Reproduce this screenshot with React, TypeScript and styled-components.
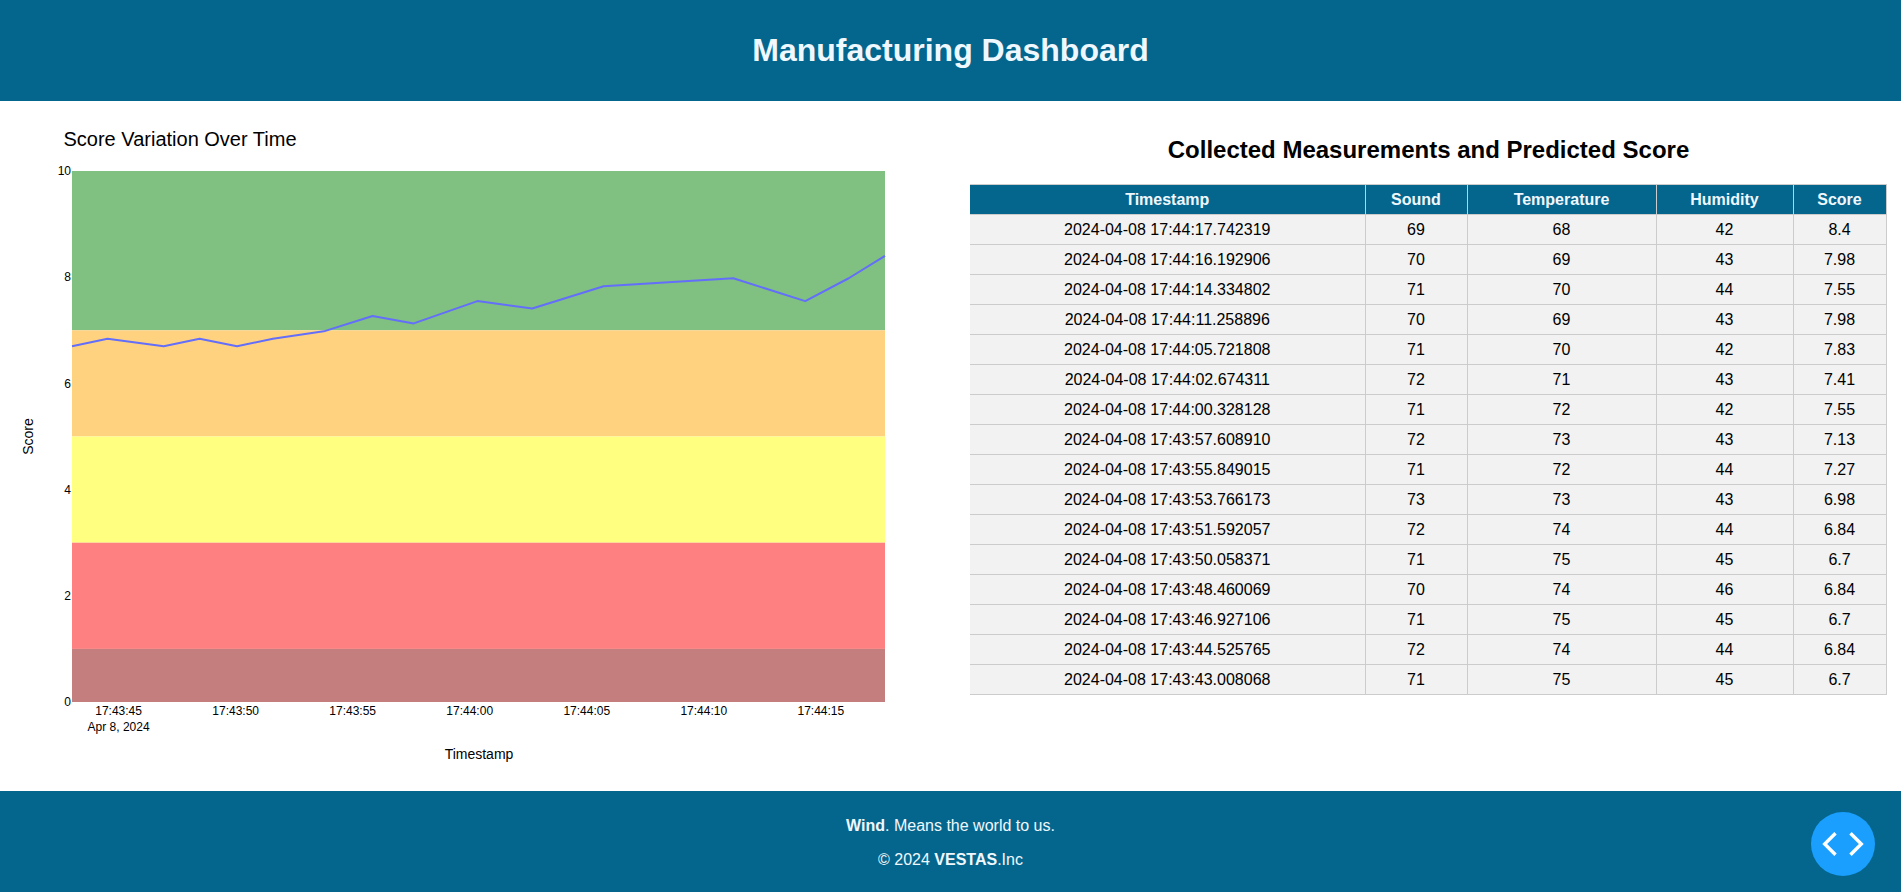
import React from "react";
import styled, { createGlobalStyle } from "styled-components";

const GlobalStyle = createGlobalStyle`
  html, body { margin: 0; padding: 0; background: #fff; }
  body { font-family: "Liberation Sans", Arial, sans-serif; color: #000; }
`;

const Page = styled.div`
  position: relative;
  display: flex;
  flex-direction: column;
  height: 892px;
  overflow: hidden;
`;
const Header = styled.header`
  height: 101px;
  flex: none;
  background: #05668d;
  display: flex;
  align-items: center;
  justify-content: center;
`;
const Title = styled.h1`
  margin: 0;
  font-size: 32px;
  font-weight: 700;
  color: #f0f8ff;
`;
const Main = styled.main`
  flex: 1;
  display: flex;
  min-height: 0;
`;
const ChartPane = styled.section`
  width: 970px;
  flex: none;
`;
const TablePane = styled.section`
  flex: 1;
  padding: 34px 14px 0 0;
`;
const TableTitle = styled.h2`
  margin: 0 0 19px;
  font-size: 24px;
  line-height: 30px;
  font-weight: 700;
  text-align: center;
`;
const Table = styled.table`
  border-collapse: collapse;
  width: 916px;
  table-layout: fixed;
  font-size: 16px;
`;
const Th = styled.th`
  height: 29px;
  padding: 0;
  background: #05668d;
  color: #f0f8ff;
  border: 1px solid #cccccc;
  font-weight: 700;
  text-align: center;
  &:first-child { border-left: 0; }
`;
const Td = styled.td`
  height: 29px;
  padding: 0;
  background: #f2f2f2;
  border: 1px solid #cccccc;
  text-align: center;
  &:first-child { border-left: 0; }
`;
const Footer = styled.footer`
  height: 101px;
  flex: none;
  padding-top: 2px;
  box-sizing: border-box;
  background: #05668d;
  color: #f0f8ff;
  font-size: 16px;
  display: flex;
  flex-direction: column;
  align-items: center;
  justify-content: center;
  gap: 16px;
`;
const FooterLine = styled.div`
  line-height: 18px;
`;
const Fab = styled.button`
  position: absolute;
  right: 26px;
  bottom: 16px;
  width: 64px;
  height: 64px;
  border: 0;
  padding: 0;
  border-radius: 50%;
  background: #1a9fff;
  display: flex;
  align-items: center;
  justify-content: center;
`;

const rows: [string, number, number, number, number][] = [
  ["2024-04-08 17:44:17.742319", 69, 68, 42, 8.4],
  ["2024-04-08 17:44:16.192906", 70, 69, 43, 7.98],
  ["2024-04-08 17:44:14.334802", 71, 70, 44, 7.55],
  ["2024-04-08 17:44:11.258896", 70, 69, 43, 7.98],
  ["2024-04-08 17:44:05.721808", 71, 70, 42, 7.83],
  ["2024-04-08 17:44:02.674311", 72, 71, 43, 7.41],
  ["2024-04-08 17:44:00.328128", 71, 72, 42, 7.55],
  ["2024-04-08 17:43:57.608910", 72, 73, 43, 7.13],
  ["2024-04-08 17:43:55.849015", 71, 72, 44, 7.27],
  ["2024-04-08 17:43:53.766173", 73, 73, 43, 6.98],
  ["2024-04-08 17:43:51.592057", 72, 74, 44, 6.84],
  ["2024-04-08 17:43:50.058371", 71, 75, 45, 6.7],
  ["2024-04-08 17:43:48.460069", 70, 74, 46, 6.84],
  ["2024-04-08 17:43:46.927106", 71, 75, 45, 6.7],
  ["2024-04-08 17:43:44.525765", 72, 74, 44, 6.84],
  ["2024-04-08 17:43:43.008068", 71, 75, 45, 6.7],
];

const columns = [
  { name: "Timestamp", width: 395 },
  { name: "Sound", width: 102 },
  { name: "Temperature", width: 189 },
  { name: "Humidity", width: 137 },
  { name: "Score", width: 93 },
];

const secs = (t: string) => {
  const [h, m, s] = t.split(" ")[1].split(":").map(Number);
  return h * 3600 + m * 60 + s;
};
const L = 72, R = 885, T = 171 - 101, B = 702 - 101;
const t0 = secs(rows[rows.length - 1][0]);
const t1 = secs(rows[0][0]);
const X = (s: number) => L + ((s - t0) / (t1 - t0)) * (R - L);
const Y = (v: number) => B - (v / 10) * (B - T);

const bands = [
  { from: 7, to: 10, fill: "#80c080" },
  { from: 5, to: 7, fill: "#ffd280" },
  { from: 3, to: 5, fill: "#ffff80" },
  { from: 1, to: 3, fill: "#ff8080" },
  { from: 0, to: 1, fill: "#c57e7e" },
];
const xTicks = ["17:43:45", "17:43:50", "17:43:55", "17:44:00", "17:44:05", "17:44:10", "17:44:15"];

const ScoreChart = () => {
  const line = [...rows].reverse().map((r) => `${X(secs(r[0])).toFixed(2)},${Y(r[4]).toFixed(2)}`).join(" ");
  return (
    <svg width="970" height="690" viewBox="0 0 970 690" fontFamily='"Liberation Sans", Arial, sans-serif' style={{ display: "block" }}>
      <text x="63.5" y="45" fontSize="20" fill="#000">Score Variation Over Time</text>
      {bands.map((b) => (
        <rect key={b.from} x={L} y={Y(b.to)} width={R - L} height={Y(b.from) - Y(b.to)} fill={b.fill} />
      ))}
      <polyline points={line} fill="none" stroke="#636efa" strokeWidth="2" strokeLinejoin="round" />
      {[0, 2, 4, 6, 8, 10].map((v) => (
        <text key={v} x="71" y={Y(v) + 4.2} fontSize="12" textAnchor="end" fill="#000">{v}</text>
      ))}
      {xTicks.map((t) => (
        <text key={t} x={X(secs("d " + t))} y={B + 13} fontSize="12" textAnchor="middle" fill="#000">{t}</text>
      ))}
      <text x={X(secs("d 17:43:45"))} y={B + 29} fontSize="12" textAnchor="middle" fill="#000">Apr 8, 2024</text>
      <text x="479" y="658" fontSize="14" textAnchor="middle" fill="#000">Timestamp</text>
      <text transform="translate(33 335.5) rotate(-90)" fontSize="14" textAnchor="middle" fill="#000">Score</text>
    </svg>
  );
};

export default function App() {
  return (
    <Page>
      <GlobalStyle />
      <Header>
        <Title>Manufacturing Dashboard</Title>
      </Header>
      <Main>
        <ChartPane>
          <ScoreChart />
        </ChartPane>
        <TablePane>
          <TableTitle>Collected Measurements and Predicted Score</TableTitle>
          <Table>
            <colgroup>
              {columns.map((c) => (
                <col key={c.name} width={c.width} />
              ))}
            </colgroup>
            <thead>
              <tr>
                {columns.map((c) => (
                  <Th key={c.name}>{c.name}</Th>
                ))}
              </tr>
            </thead>
            <tbody>
              {rows.map((r) => (
                <tr key={r[0]}>
                  {r.map((v, i) => (
                    <Td key={i}>{v}</Td>
                  ))}
                </tr>
              ))}
            </tbody>
          </Table>
        </TablePane>
      </Main>
      <Footer>
        <FooterLine><strong>Wind</strong>. Means the world to us.</FooterLine>
        <FooterLine>© 2024 <strong>VESTAS</strong>.Inc</FooterLine>
      </Footer>
      <Fab aria-label="Toggle code">
        <svg width="42" height="24" viewBox="0 0 42 24" fill="none" stroke="#fff" strokeWidth="3.4">
          <path d="M13.5 1.2 L2.7 12 L13.5 22.8" />
          <path d="M28.5 1.2 L39.3 12 L28.5 22.8" />
        </svg>
      </Fab>
    </Page>
  );
}
